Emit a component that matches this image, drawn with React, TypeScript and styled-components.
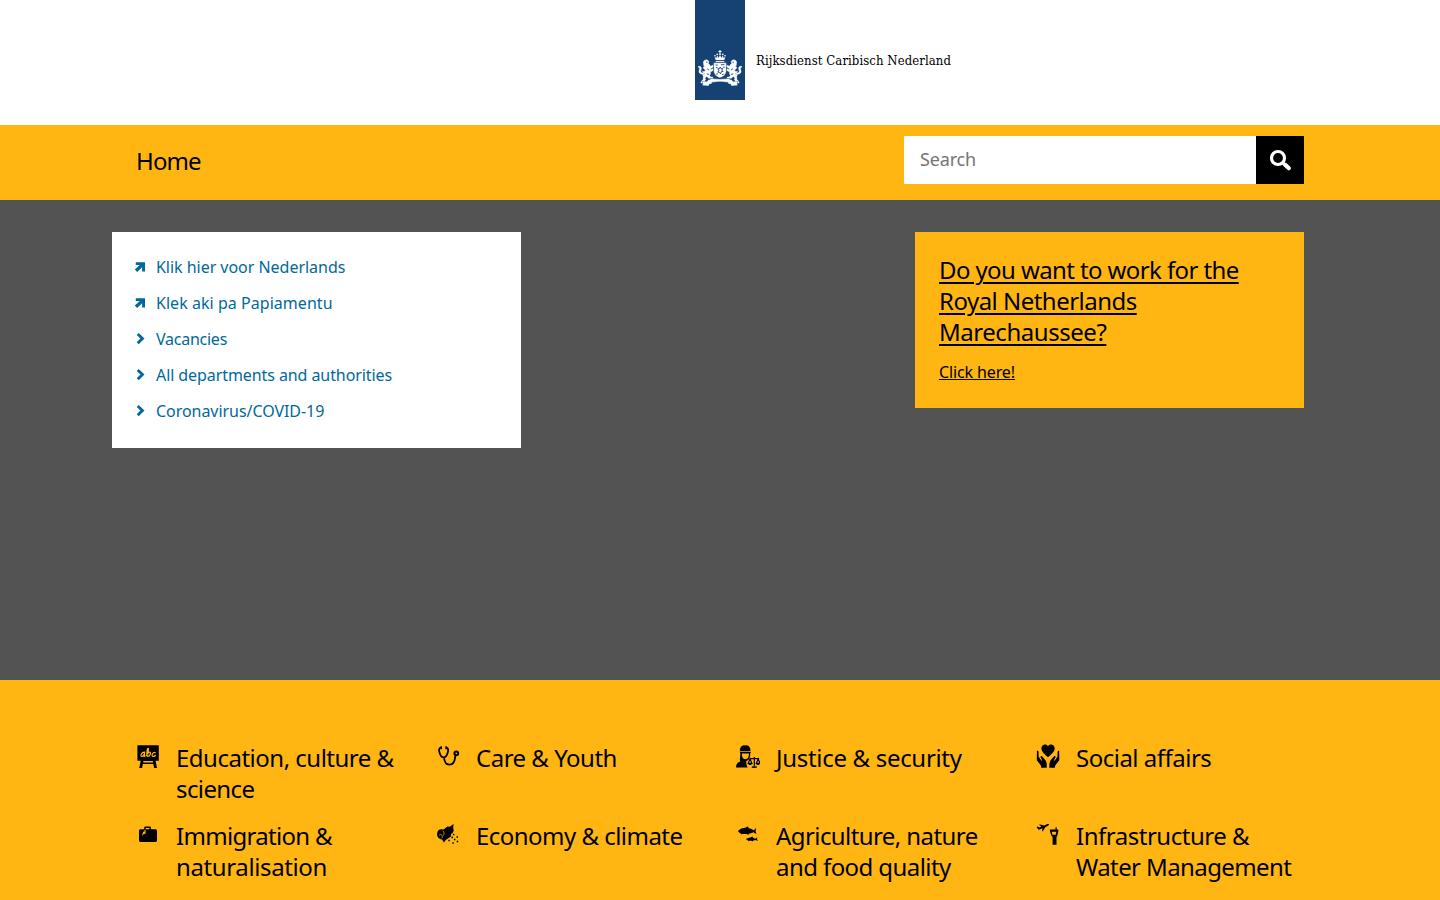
import React from 'react';
import styled, { createGlobalStyle } from 'styled-components';

const GlobalStyle = createGlobalStyle`
  *, *::before, *::after { box-sizing: border-box; }
  html, body { margin: 0; padding: 0; }
  body {
    height: 900px;
    overflow: hidden;
    background: #fff;
    color: #000;
    font-family: 'Noto Sans', 'Open Sans', sans-serif;
    font-size: 16px;
  }
  a { color: inherit; text-decoration: none; }
`;

const Page = styled.div`
  width: 1440px;
  height: 900px;
  overflow: hidden;
`;

const Header = styled.header`
  display: flex;
  height: 125px;
  padding-left: 695px;
`;

const LogoText = styled.span`
  margin: 52px 0 0 11px;
  font-family: 'DejaVu Serif Condensed', 'DejaVu Serif', serif;
  font-stretch: condensed;
  font-size: 13px;
  letter-spacing: 0.08px;
  line-height: 17px;
  white-space: nowrap;
`;

const NavBar = styled.nav`
  display: flex;
  justify-content: space-between;
  height: 75px;
  padding: 11px 136px 0;
  background: #ffb612;
`;

const NavLink = styled.a`
  margin-top: 9px;
  font-size: 24px;
  line-height: 31px;
  letter-spacing: -0.9px;
`;

const SearchForm = styled.form`
  display: flex;
  width: 400px;
  height: 48px;
`;

const SearchInput = styled.input`
  flex: 1;
  min-width: 0;
  padding: 0 16px 2px;
  border: 0;
  border-radius: 0;
  background: #fff;
  font-family: inherit;
  font-size: 18px;
  letter-spacing: -0.15px;
  &::placeholder { color: #757575; opacity: 1; }
`;

const SearchButton = styled.button`
  width: 48px;
  height: 48px;
  padding: 0;
  border: 0;
  background: #000;
  svg { display: block; }
`;

const Hero = styled.main`
  display: flex;
  justify-content: space-between;
  align-items: flex-start;
  height: 480px;
  padding: 32px 136px 0 112px;
  background: #535353;
`;

const LinkPanel = styled.ul`
  width: 409px;
  height: 216px;
  margin: 0;
  padding: 17px 20px;
  background: #fff;
  list-style: none;
`;

const LinkRow = styled.li`
  display: flex;
  align-items: center;
  height: 36px;
  color: #01689b;
  svg { flex: none; width: 16px; height: 16px; margin-right: 8px; }
`;

const RowLabel = styled.a<{ $spacing: number }>`
  font-size: 16px;
  line-height: 24px;
  letter-spacing: ${(p) => p.$spacing}px;
`;

const Promo = styled.section`
  width: 389px;
  height: 176px;
  padding: 22px 24px;
  background: #ffb612;
`;

const PromoTitle = styled.h2`
  margin: 0 0 13px;
  font-size: 24px;
  font-weight: 400;
  line-height: 31px;
  text-decoration: underline;
  text-decoration-thickness: 2px;
  text-underline-offset: 3px;
`;

const PromoLine = styled.span<{ $spacing: number }>`
  display: block;
  white-space: nowrap;
  letter-spacing: ${(p) => p.$spacing}px;
`;

const PromoLink = styled.a`
  display: block;
  font-size: 16px;
  line-height: 24px;
  letter-spacing: -0.12px;
  text-decoration: underline;
`;

const Topics = styled.section`
  display: grid;
  grid-template-columns: repeat(4, 300px);
  grid-auto-rows: 62.4px;
  row-gap: 16px;
  height: 220px;
  padding: 62px 0 0 136px;
  background: #ffb612;
`;

const Topic = styled.a`
  display: flex;
  align-items: flex-start;
  svg { flex: none; width: 24px; height: 24px; margin: 2.4px 16px 0 0; }
`;

const TopicName = styled.span`
  font-size: 24px;
  line-height: 31px;
`;

const TopicLine = styled.span<{ $spacing: number }>`
  display: block;
  white-space: nowrap;
  letter-spacing: ${(p) => p.$spacing}px;
`;

const Lion = () => (
  <g stroke="#fff" strokeWidth=".5">
    <path d="M8.400 61.600 9.800 60.200l1.800-.4 1.500.8.8 1.300-.7 1.300 1.200 1.200 1.200 1.900 1.800-.7 1-.9.5.8-.8 1.500-2 1.300-1 1.200 1.500.1 1.300-.8.7.9-1.300 1.400-2.100.7.3 1.900-1.200 2.200 1.900 1.100 1.700.3v1h-4l-2.300-1.900-1.600 1.500.6 2H8.600l-.4-2.200 1.500-2.200.2-2.300-1.700-.5-.7-1.300 1.400.1 1.500-.4-.4-1.700-1.400-.9-.3-1.400 1.300-.5-.8-1.100z" />
    <path d="M3 66.700c1.700-.9 3.200 0 3.400 1.500.2 1.300-.9 2.200-.7 3.300.3 1.200 1.300 1.600 2.700 1.400l.3 1c-2.300.6-4.500-.2-4.700-2.200-.1-1.500.8-2.400.5-3.400-.2-.6-.7-.9-1.500-1.600z" />
    <path d="m7.200 74.600 3.200-.6-1.700 2.500.2 2.600-1.900 1.400-1.200 2.500h5.600" />
  </g>
);

const Crest = () => (
  <svg width="50" height="100" viewBox="0 0 50 100" aria-hidden="true">
    <path fill="#154273" d="M0 0h50v100H0z" />
    <g fill="#fff">
      <path d="M24.500 50h1v1.100h1v.9h-1v1.600h-1V52h-1v-.9h1z" />
      <circle cx="25" cy="54.200" r=".9" />
      <circle cx="22.200" cy="54.400" r=".8" />
      <circle cx="27.800" cy="54.400" r=".8" />
      <circle cx="20" cy="55.800" r=".8" />
      <circle cx="30" cy="55.800" r=".8" />
      <path d="m19.600 56.700 1.900 1.300.6-2.500 1.500 2.300L25 55l1.400 2.800 1.500-2.300.6 2.500 1.900-1.300-1.100 3.400h-8.600z" />
      <path d="M20.700 60.900h8.600v1h-8.600z" />
      <Lion />
      <g transform="matrix(-1 0 0 1 50 0)"><Lion /></g>
      <path stroke="#154273" strokeWidth=".6" d="M18.600 62.600h12.800v7.900c0 3.900-2.800 6.300-6.400 7.500-3.600-1.200-6.400-3.600-6.400-7.500z" />
      <path stroke="#154273" strokeWidth=".4" d="M7.200 81.400h4.400l2.300-1.900h1.300l.4-1.200c5.700 1 13.100 1 18.800 0l.4 1.200h1.300l2.300 1.900h4.400l-.6 2.100.4 2-6.300.5-.8-1.900-2.200-.2-.2-1.500c-5.700-.8-10.500-.8-16.200 0l-.2 1.500-2.200.2-.8 1.900-6.300-.5.4-2z" />
    </g>
    <g fill="none" stroke="#154273" strokeWidth=".9">
      <path d="m22.900 72.200 1-2.100-1.200-1.300 1.800-.1.600-1.700 1 1.600 1.600-.2-.9 1.700 1.300 1.300-1.800.3-.7 2.200-1.100-1.700z" />
      <path d="M20.600 65h2.100M26 64.700h3.400M20.900 67.500h1.500M28 67.200h1.700M21.200 74.200l1.700-.5M27 74.600l1.700-.5" />
      <path d="M11.200 62.200h1.300M12.200 68.800l1.900 1.300M11.700 73.900l2.300.4" />
      <path d="M38.800 62.200h-1.300M37.800 68.800l-1.900 1.300M38.300 73.900l-2.300.4" />
    </g>
  </svg>
);

const ExternalArrow = () => (
  <svg viewBox="0 0 16 16" fill="#01689b" aria-hidden="true">
    <path d="M3.800 3.200H13v9.200h-2.900V8.300L5.100 12.900 2.800 10.600l5-4.500h-4z" />
  </svg>
);

const Chevron = () => (
  <svg viewBox="0 0 16 16" fill="none" stroke="#01689b" strokeWidth="2.800" aria-hidden="true">
    <path d="m5.700 2.900 4.800 4.700-4.800 4.700" />
  </svg>
);

const Magnifier = () => (
  <svg width="48" height="48" viewBox="0 0 48 48" fill="none" stroke="#fff" aria-hidden="true">
    <circle cx="22" cy="22" r="6.500" strokeWidth="3.200" />
    <path d="m26.500 26.500 3 2.800" strokeWidth="3.400" />
    <path d="m29.300 28.900 3.600 3.300" strokeWidth="4.200" strokeLinecap="round" />
  </svg>
);

const Blackboard = () => (
  <svg viewBox="0 0 24 24" aria-hidden="true">
    <path d="M1.400 1.200h21.400v15.600h-3.200L21 24h-2.900l-.8-3.900H6.900L6.100 24H3.200l1.500-7.200H1.400zM7.500 17l-.3 1.500h9.900l-.3-1.500z" />
    <g fill="none" stroke="#ffb612" strokeWidth="1.200" strokeLinecap="round">
      <path d="M8.700 8.200C5.500 7.700 3.900 12.500 5.700 12.500c1.300 0 2.700-3 3-4.300l-.6 4.200 1.200-.4M10.500 11.500c1.500-2 2.600-7.400 1.500-7.200-1 .1-1.800 8.100-.3 8.100 2.600 0 3.700-4.400 1.800-4.300-1.100.1-1.600 1.500-1.600 1.500M19.300 8.700c-2.800-1.400-4.400 3.800-2.200 3.800.9 0 1.800-.5 2.300-1" />
    </g>
  </svg>
);

const Stethoscope = () => (
  <svg viewBox="0 0 24 24" fill="none" stroke="#000" aria-hidden="true">
    <path d="M5.200 3.700C2.300 4 2.900 6.700 3.700 9c.7 2.700 2 4.400 3.900 4.400s3.300-1.700 4-4.400c.7-2.300 1.300-5-1.400-5.300M8 13.500c.3 3.800 2.200 7.100 5.400 7.100 3.800 0 5.400-3.500 5.700-7.200 0-1 .2-2.300 1-3.300" strokeWidth="1.800" />
    <path d="M5.200 2.300v2.900M10.100 2.300v2.900" strokeWidth="1.500" />
    <circle cx="20.300" cy="9.300" r="1.900" strokeWidth="2" />
  </svg>
);

const Justice = () => (
  <svg viewBox="0 0 24 24" aria-hidden="true">
    <path d="M3.800 7.300C3.900 3 6.200 1 9 1.400c3.200-1 5.800 1.700 5.500 5.900zM3.900 8h10.900l-.5 1.400H4.300zM0 23.600c.1-3.600 1.300-5 4.200-6-.9-3 .3-5.500.1-8.500h1.500c.2 4.200 1 6.100 3.600 6.100s3.400-1.900 3.600-6.100h1.300c0 3.500-.6 5.400-2 7l-2 .9v2.500l1.200 4.100z" />
    <g fill="none" stroke="#000" strokeWidth="1.200">
      <path d="M18.300 13v9.500M13.600 14.600h9.500M14 15l-1.800 4.300h3.700zM22.200 15l-1.900 4.300h3.700z" />
      <path d="M15.800 23.100h5" strokeWidth="1.500" />
    </g>
    <path d="M12 18.900h4.300c-.3 2.800-4 2.800-4.300 0zM19.900 18.900h4.100c-.3 2.800-3.900 2.800-4.100 0z" />
  </svg>
);

const Hand = () => (
  <path d="M.9 6.700c1.200-.2 1.700.5 1.700 1.500v4.200l2.800 4.300.8-.5-1.600-2.800c-.3-1.400.8-1.800 1.700-.9l3.500 4.300c.9 1.400 1.100 3.700 1 7H5.200c0-2-.5-3-1.800-4.300L.8 16.300z" />
);

const HeartHands = () => (
  <svg viewBox="0 0 24 24" aria-hidden="true">
    <path d="M12 13.300C8.900 10.500 5.400 7.900 5.400 4.300 5.400.4 10.200-.8 12 2.100c1.800-2.900 6.700-1.700 6.700 2.200 0 3.600-3.600 6.200-6.700 9z" />
    <Hand />
    <g transform="matrix(-1 0 0 1 24.100 0)"><Hand /></g>
  </svg>
);

const Suitcase = () => (
  <svg viewBox="0 0 24 24" aria-hidden="true">
    <path d="M8.200 6.300V4.900c0-.9.500-1.400 1.400-1.400h3.900c.9 0 1.400.5 1.400 1.400v1.400h4.400c1.100 0 1.700.6 1.700 1.700v9.300c0 1.200-.6 1.800-1.700 1.800H4.700c-1.100 0-1.700-.6-1.700-1.800V8c0-1.100.6-1.700 1.700-1.700zm1.500 0h3.700V5H9.700z" />
    <path fill="#ffb612" d="M8.500 6.800h1v1.800c.5 1.300-.2 2.300-.9 2.300H7.500l-.8 1.600-.8-.5 1-1.900c-.3-1 .6-1.700 1.600-1.600z" />
  </svg>
);

const Shell = () => (
  <svg viewBox="0 0 24 24" aria-hidden="true">
    <path d="M17.600.9 17.200 4.500l.5 3.300-1 2-1.800 1.500.4 2-3 1.900-2.200 1.500-2.300 2.700-1.700-2.900C2.500 15.900.9 13.400 1.100 10.700 1.400 7 4.200 5.700 7 6.700l2.200-1.400 2.200-1.900 2.300.3z" />
    <path d="M3 12.200c1.400-1.300 3.300-.5 3.500 1l-.6 2.200M6.600 7.800c1.600.6 1.800 2.900.9 4.700" fill="none" stroke="#ffb612" strokeWidth=".7" />
    <path d="M16.900 10.800h1.500v1.500h-1.500zM15.500 13.800H17v1.500h-1.500zM20.500 13.300H22v1.500h-1.500zM17.900 15.700h1.500v1.500h-1.500zM12.300 16.700h1.500v1.500h-1.500zM20.700 17.700h1.500v1.500h-1.500zM16.300 19.200h1.500v1.500h-1.500z" />
  </svg>
);

const Fish = () => (
  <svg viewBox="0 0 24 24" aria-hidden="true">
    <path d="M2 8.100c2.300-2.300 4.500-3.200 7.100-3.300l2.600-1.300L13 5.200c1.800.3 3.400 1.100 4.800 2l2.300-2.100-.5 2.800.8 3-3.100-1.700c-1.600.7-3 1.200-4.700 1.500l.3 1.400-2.200-1.200c-1.500.2-3.200.1-4.800-.2l-.7 1-.5-1.300C3 9.800 2.200 9 2 8.100z" />
    <path d="M9.900 16.100c1.500-1.200 3-1.600 4.600-1.700l1.800-.8.8 1.100 2.300 1 2-1.500-.4 1.900.8 1.800-2.400-1-2.500.8.1.9-1.500-.8-2.700-.1-.6.6-.3-.8z" />
  </svg>
);

const Airport = () => (
  <svg viewBox="0 0 24 24" aria-hidden="true">
    <path d="m.7 3.900 1.100-.3 1.600 1 2.100-1-2.600-1.800 1.300-.4 3.900 1.100 2.700-1.300c1-.4 2-.4 2.200.1.200.7-.7 1.300-1.500 1.700L9.300 4.300 7.200 7.800l-1.200.6.5-3.200-2.900 1.400-1.400-.2z" />
    <path d="M19.500 4.300h1.200v2.300h1.600v2l-1.200 4.800h-.6v8.300h-3.900v-8.300h-.8l-1.900-4.800v-2h5.600zm-3.600 4.400.5 3h3.300l.6-3z" />
  </svg>
);

const links = [
  { label: 'Klik hier voor Nederlands', external: true, spacing: -0.03 },
  { label: 'Klek aki pa Papiamentu', external: true, spacing: 0.04 },
  { label: 'Vacancies', external: false, spacing: -0.25 },
  { label: 'All departments and authorities', external: false, spacing: -0.08 },
  { label: 'Coronavirus/COVID-19', external: false, spacing: -0.05 },
];

const promoLines = [
  { text: 'Do you want to work for the', spacing: -0.6 },
  { text: 'Royal Netherlands', spacing: -0.52 },
  { text: 'Marechaussee?', spacing: -0.46 },
];

type Line = { text: string; spacing: number };

const topics: { icon: React.FC; lines: Line[] }[] = [
  { icon: Blackboard, lines: [{ text: 'Education, culture &', spacing: -0.5 }, { text: 'science', spacing: -0.6 }] },
  { icon: Stethoscope, lines: [{ text: 'Care & Youth', spacing: -0.5 }] },
  { icon: Justice, lines: [{ text: 'Justice & security', spacing: -0.31 }] },
  { icon: HeartHands, lines: [{ text: 'Social affairs', spacing: -0.5 }] },
  { icon: Suitcase, lines: [{ text: 'Immigration &', spacing: -0.7 }, { text: 'naturalisation', spacing: -0.38 }] },
  { icon: Shell, lines: [{ text: 'Economy & climate', spacing: -0.53 }] },
  { icon: Fish, lines: [{ text: 'Agriculture, nature', spacing: -0.58 }, { text: 'and food quality', spacing: -0.58 }] },
  { icon: Airport, lines: [{ text: 'Infrastructure &', spacing: -0.48 }, { text: 'Water Management', spacing: -0.6 }] },
];

export default function App() {
  return (
    <Page>
      <GlobalStyle />
      <Header>
        <Crest />
        <LogoText>Rijksdienst Caribisch Nederland</LogoText>
      </Header>
      <NavBar>
        <NavLink href="#">Home</NavLink>
        <SearchForm>
          <SearchInput placeholder="Search" aria-label="Search" />
          <SearchButton type="button" aria-label="Start search"><Magnifier /></SearchButton>
        </SearchForm>
      </NavBar>
      <Hero>
        <LinkPanel>
          {links.map((link) => (
            <LinkRow key={link.label}>
              {link.external ? <ExternalArrow /> : <Chevron />}
              <RowLabel href="#" $spacing={link.spacing}>{link.label}</RowLabel>
            </LinkRow>
          ))}
        </LinkPanel>
        <Promo>
          <PromoTitle>
            {promoLines.map((line) => (
              <PromoLine key={line.text} $spacing={line.spacing}>{line.text}</PromoLine>
            ))}
          </PromoTitle>
          <PromoLink href="#">Click here!</PromoLink>
        </Promo>
      </Hero>
      <Topics>
        {topics.map(({ icon: Icon, lines }) => (
          <Topic href="#" key={lines[0].text}>
            <Icon />
            <TopicName>
              {lines.map((line) => (
                <TopicLine key={line.text} $spacing={line.spacing}>{line.text}</TopicLine>
              ))}
            </TopicName>
          </Topic>
        ))}
      </Topics>
    </Page>
  );
}
